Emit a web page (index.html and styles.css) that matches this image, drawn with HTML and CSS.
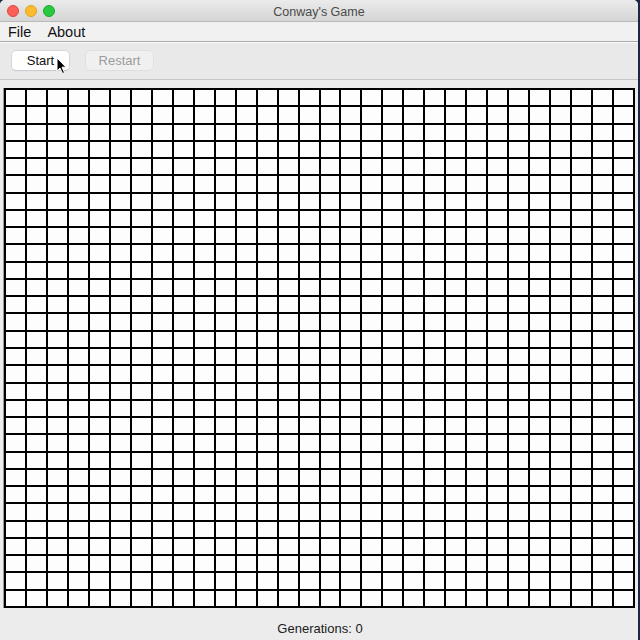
FILE: index.html
```html
<!DOCTYPE html>
<html>
<head>
<meta charset="utf-8">
<link rel="stylesheet" href="styles.css">
</head>
<body>
<div class="window">
  <div class="titlebar">
    <div class="lights">
      <span class="light red"></span>
      <span class="light yellow"></span>
      <span class="light green"></span>
    </div>
    <div class="title">Conway's Game</div>
  </div>
  <div class="menubar">
    <span class="menu">File</span>
    <span class="menu">About</span>
  </div>
  <div class="toolbar">
    <button class="btn">Start</button>
    <button class="btn disabled">Restart</button>
    <svg class="cursor" width="12" height="18" viewBox="0 0 12 18">
      <path d="M1 1 L1 14 L4 11 L6.5 16.5 L8.5 15.6 L6 10.2 L10 10.2 Z" fill="#000" stroke="#fff" stroke-width="1"/>
    </svg>
  </div>
  <div class="content">
    <div class="grid" id="grid"></div>
  </div>
  <div class="status">Generations: 0</div>
</div>
<script>
  var g = document.getElementById('grid');
  var html = '';
  for (var i = 0; i < 900; i++) html += '<div class="cell"></div>';
  g.innerHTML = html;
</script>
</body>
</html>
```
FILE: styles.css
```css
html, body {
  margin: 0;
  padding: 0;
  background: #1b2840;
  width: 640px;
  height: 640px;
  overflow: hidden;
}

.window {
  width: 638px;
  height: 640px;
  background: #ececec;
  border-radius: 5px 5px 0 0;
  overflow: hidden;
  display: flex;
  flex-direction: column;
  font-family: "Liberation Sans", Arial, sans-serif;
}

.titlebar {
  height: 22px;
  flex: none;
  background: linear-gradient(#ebebeb, #d5d5d5);
  border-bottom: 1px solid #b9b9b9;
  display: flex;
  align-items: center;
  justify-content: center;
  position: relative;
  box-sizing: border-box;
  padding-top: 3px;
}

.lights {
  position: absolute;
  left: 7px;
  top: 5px;
  display: flex;
  gap: 6px;
}

.light {
  width: 12px;
  height: 12px;
  border-radius: 50%;
  box-sizing: border-box;
}
.red { background: #fc5f57; border: 0.5px solid #e0443e; }
.yellow { background: #fdbc2e; border: 0.5px solid #dea123; }
.green { background: #28c940; border: 0.5px solid #1aab29; }

.title {
  font-size: 12.5px;
  color: #4a4a4a;
}

.menubar {
  height: 20px;
  flex: none;
  background: #f1f1f1;
  border-bottom: 1px solid #a9a9a9;
  display: flex;
  align-items: center;
  gap: 16px;
  padding-left: 8px;
  padding-top: 1px;
  box-sizing: border-box;
}

.menu {
  font-size: 14.5px;
  color: #111;
}

.toolbar {
  height: 38px;
  flex: none;
  background: #e9e9e9;
  border-bottom: 1px solid #c7c7c7;
  border-top: 1px solid #fbfbfb;
  box-sizing: border-box;
  display: flex;
  align-items: center;
  gap: 17px;
  padding-left: 12px;
  padding-bottom: 1px;
  position: relative;
}

.btn {
  font-family: "Liberation Sans", Arial, sans-serif;
  font-size: 13px;
  height: 19px;
  padding: 0;
  border: none;
  border-radius: 4px;
  background: #ffffff;
  color: #111;
  box-shadow: 0 0 0 0.5px #c4c4c4, 0 1px 1px rgba(0,0,0,0.12);
  width: 57px;
  line-height: 19px;
}

.btn.disabled {
  width: 67px;
  background: #f0f0f0;
  color: #9c9c9c;
  box-shadow: 0 0 0 0.5px #d6d6d6;
}

.cursor {
  position: absolute;
  left: 56px;
  top: 14px;
}

.content {
  flex: none;
  padding: 8px 0 0 4px;
}

.grid {
  width: 631px;
  height: 520px;
  box-sizing: border-box;
  background: #000;
  padding: 2px;
  display: grid;
  grid-template-columns: repeat(30, 1fr);
  grid-template-rows: repeat(30, 1fr);
  gap: 2px;
  box-shadow: -1px 0 0 #9a9a9a;
}

.cell {
  background: #fdfdfd;
}

.status {
  flex: 1;
  display: flex;
  align-items: center;
  justify-content: center;
  font-size: 13px;
  color: #1a1a1a;
  padding-left: 2px;
  padding-top: 8px;
}
```
